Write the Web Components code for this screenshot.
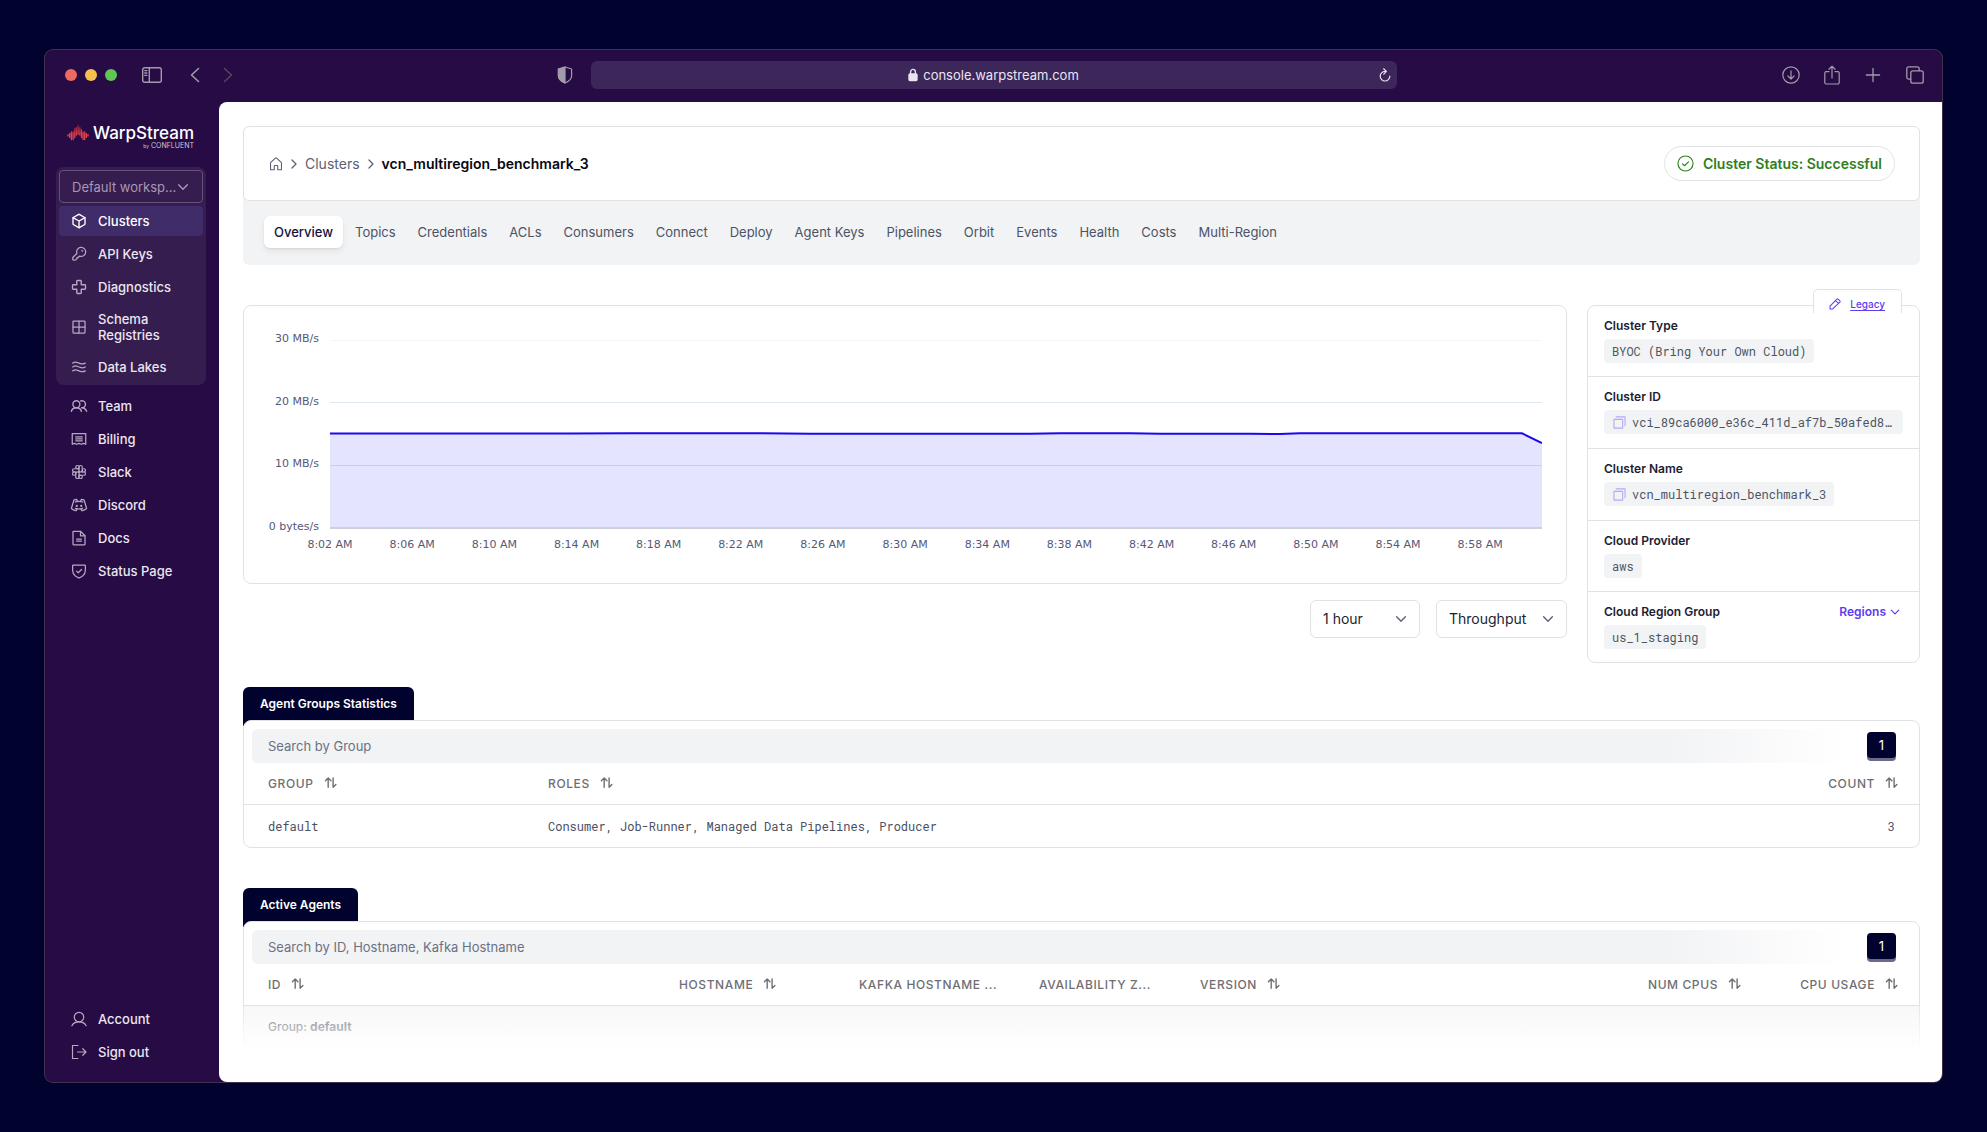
<!DOCTYPE html>
<html lang="en">
<head>
<meta charset="utf-8">
<title>WarpStream Console</title>
<style>
  html, body { margin: 0; height: 100%; }
  body {
    background: #02022f;
    font-family: Inter, "Liberation Sans", sans-serif;
    font-size: 13px;
    line-height: 16px;
    color: #1b1d33;
    --mono: "Roboto Mono", "DejaVu Sans Mono", "Liberation Mono", monospace;
    --line: #e1e2e4;
    --soft: #f2f3f5;
    --ink: #02022f;
    --slate: #5a6274;
    --violet: #5b3df0;
  }
</style>
</head>
<body>
<app-window>
  <title-bar slot="bar"></title-bar>
  <side-nav slot="nav"></side-nav>
  <page-header></page-header>
  <cluster-overview></cluster-overview>
  <data-panel heading="Agent Groups Statistics" placeholder="Search by Group"><groups-table></groups-table></data-panel>
  <data-panel class="last" heading="Active Agents" placeholder="Search by ID, Hostname, Kafka Hostname"><agents-table></agents-table></data-panel>
</app-window>

<script>
const define = (name, html, setup) => {
  const template = document.createElement('template');
  template.innerHTML = html;
  customElements.define(name, class extends HTMLElement {
    constructor() {
      super();
      this.attachShadow({ mode: 'open' }).append(template.content.cloneNode(true));
    }
    connectedCallback() {
      if (this.ready) return;
      this.ready = true;
      if (setup) setup(this, this.shadowRoot);
    }
  });
};

/* Line icons: [viewBox, stroke width, markup] */
const ICONS = {
  cube: ['0 0 256 256', 22, '<path d="M224,177.3V78.7a8.1,8.1,0,0,0-4.1-7l-88-49.5a7.8,7.8,0,0,0-7.8,0l-88,49.5a8.1,8.1,0,0,0-4.1,7v98.6a8.1,8.1,0,0,0,4.1,7l88,49.5a7.8,7.8,0,0,0,7.8,0l88-49.5A8.1,8.1,0,0,0,224,177.3Z"/><path d="M222.9,74.6 128.9,128 33.1,74.6M128.9,128 128,234"/>'],
  key: ['0 0 256 256', 20, '<path d="M95,119A72,72,0,1,1,137,161L114,184H96v18L78,220a14,14,0,0,1-10,4H40a12,12,0,0,1-12-12V190a14,14,0,0,1,4-10Z"/><circle cx="180" cy="76" r="5"/>'],
  cross: ['0 0 256 256', 22, '<path d="M104,24h48a12,12,0,0,1,12,12V92h56a12,12,0,0,1,12,12v48a12,12,0,0,1-12,12H164v56a12,12,0,0,1-12,12H104a12,12,0,0,1-12-12V164H36a12,12,0,0,1-12-12V104a12,12,0,0,1,12-12H92V36A12,12,0,0,1,104,24Z"/>'],
  grid: ['0 0 256 256', 20, '<rect x="32" y="32" width="192" height="192" rx="8"/><path d="M128,32V224M32,128H224"/>'],
  waves: ['0 0 256 256', 20, '<path d="M28,66c50-36,66-10,100,0s50,30,100,0M28,128c50-36,66-10,100,0s50,30,100,0M28,190c50-36,66-10,100,0s50,30,100,0"/>'],
  users: ['0 0 256 256', 22, '<circle cx="86" cy="100" r="56"/><path d="M6,212c8-32,34-56,80-56s72,24,80,56M156,48a56,56,0,1,1,14,108c38,0,66,22,80,56"/>'],
  receipt: ['0 0 256 256', 20, '<path d="M20,212V40H236V212l-36-14-36,14-36-14-36,14L56,198Z"/><path d="M76,94H180M76,126H180M76,156H180"/>'],
  slack: ['10 10 236 236', 18, '<path d="M56,128a24,24,0,1,0,24,24V128ZM128,56a24,24,0,1,0-24,24h24ZM200,128a24,24,0,1,0-24-24v24ZM128,200a24,24,0,1,0,24-24H128Z"/><path d="M152,128a24,24,0,0,1-24-24V56a24,24,0,0,1,48,0v48A24,24,0,0,1,152,128ZM128,152a24,24,0,0,1,24-24h48a24,24,0,0,1,0,48H152A24,24,0,0,1,128,152ZM104,128a24,24,0,0,1,24,24v48a24,24,0,0,1-48,0V152A24,24,0,0,1,104,128ZM128,104a24,24,0,0,1-24,24H56a24,24,0,0,1,0-48h48A24,24,0,0,1,128,104Z"/>'],
  discord: ['6 6 244 244', 20, '<circle cx="94" cy="142" r="7"/><circle cx="162" cy="142" r="7"/><path d="M74,82a175,175,0,0,1,108,0M74,178a175,175,0,0,0,108,0M155,184l14,26a8,8,0,0,0,9,4c23-6,44-15,62-30a8,8,0,0,0,3-9L206,56a8,8,0,0,0-5-5,158,158,0,0,0-32-9,8,8,0,0,0-9,6l-7,26M101,184,87,210a8,8,0,0,1-9,4c-23-6-44-15-62-30a8,8,0,0,1-3-9L50,56a8,8,0,0,1,5-5,158,158,0,0,1,32-9,8,8,0,0,1,9,6l7,26"/>'],
  file: ['0 0 256 256', 20, '<path d="M216,236H40a8,8,0,0,1-8-8V28a8,8,0,0,1,8-8h112l72,72V228A8,8,0,0,1,216,236Z"/><path d="M152,22V92H222M90,144h76M90,178h76"/>'],
  shield: ['0 0 256 256', 20, '<path d="M26,114V42a8,8,0,0,1,8-8H222a8,8,0,0,1,8,8v72c0,86-80,118-98,123a10,10,0,0,1-8,0C106,232,26,200,26,114Z"/><path d="M168,104l-52,52-28-26"/>'],
  user: ['0 0 256 256', 19, '<circle cx="128" cy="98" r="76"/><path d="M14,236c20-42,60-62,114-62s94,20,114,62"/>'],
  signout: ['0 0 256 256', 19, '<path d="M112,24H24V232h88M104,128H240M188,76l52,52-52,52"/>'],
  home: ['0 0 256 256', 20, '<path d="M28,232V112a16,16,0,0,1,5-12L117,22a16,16,0,0,1,22,0l84,78a16,16,0,0,1,5,12V232H160V164a8,8,0,0,0-8-8H104a8,8,0,0,0-8,8v68Z"/>'],
  right: ['0 0 6 10', 1.3, '<path d="M1,1 5,5 1,9"/>'],
  down: ['0 0 16 16', 1.6, '<path d="M3,5.5 8,10.5 13,5.5"/>'],
  check: ['0 0 18 18', 1.2, '<circle cx="9" cy="9" r="8"/><path d="M5.8,9.4 8,11.4 12.2,7.2"/>'],
  pencil: ['0 0 14 14', 1.2, '<path d="M1.2,12.8V9.6L9.2,1.3a1,1,0,0,1,1.4,0L12.7,3.4a1,1,0,0,1,0,1.4L4.4,12.8ZM7.6,3l3.4,3.4"/>'],
  copy: ['0 0 14 14', 1.2, '<path d="M1,3.6H10.4V13H1ZM3.4,1H13V10.6"/>'],
  sort: ['0 1 14 14', 1.5, '<path d="M4.5,12V2M1.5,5 4.5,2 7.5,5"/><path d="M9.8,2V12M9.8,12 12.8,9M9.8,12V9"/>'],
  sidebar: ['0 0 20 16', 1.4, '<rect x=".7" y=".7" width="18.6" height="14.6" rx="2"/><path d="M7.3,1V15M2.8,3.6h2M2.8,6h2M2.8,8.4h2"/>'],
  back: ['0 0 10 16', 1.6, '<path d="M8.5,1.5 1.5,8 8.5,14.5"/>'],
  forward: ['0 0 10 16', 1.6, '<path d="M1.5,1.5 8.5,8 1.5,14.5"/>'],
  privacy: ['0 0 16 18', 1.2, '<path d="M8,1 14.6,3V10c0,3.4-3,5.4-6.6,7C4.4,15.4,1.4,13.4,1.4,10V3Z"/><path d="M8,1V17C4.4,15.4,1.4,13.4,1.4,10V3Z" fill="currentColor"/>'],
  lock: ['0 0 10 14', 1.4, '<rect x="1" y="6" width="8" height="6.6" rx="1" fill="currentColor"/><path d="M2.6,6V4a2.4,2.6,0,0,1,4.8,0V6"/>'],
  reload: ['0 0 12 14', 1.2, '<path d="M6,3.4A4.8,4.8,0,1,0,10.8,8.2M4.6,.8 7.4,3.4 4.8,6.2"/>'],
  download: ['0 0 18 18', 1.2, '<circle cx="9" cy="9" r="8.2"/><path d="M9,4.8V13M5.8,9.8 9,13 12.2,9.8"/>'],
  share: ['0 0 16 20', 1.2, '<path d="M5,6.6H2.2a1.4,1.4,0,0,0-1.4,1.4V17.6A1.4,1.4,0,0,0,2.2,19H13.8a1.4,1.4,0,0,0,1.4-1.4V8a1.4,1.4,0,0,0-1.4-1.4H11M8,13V1.2M4.9,4.2 8,1.2 11.1,4.2"/>'],
  plus: ['0 0 14 14', 1.3, '<path d="M7,.4V13.6M.4,7H13.6"/>'],
  tabs: ['0 0 18 18', 1.3, '<rect x="4.8" y="4.8" width="12.4" height="12.4" rx="2"/><path d="M4.6,13.2H2.8a2,2,0,0,1-2-2V2.8a2,2,0,0,1,2-2h8.4a2,2,0,0,1,2,2V4.6"/>'],
};
define('line-icon', `<style>
  :host { display: block; flex: none; width: 16px; height: 16px; }
  svg { display: block; width: 100%; height: 100%; overflow: visible; }
</style>`, (el, root) => {
  const [box, stroke, body] = ICONS[el.getAttribute('name')];
  root.innerHTML += `<svg aria-hidden="true" viewBox="${box}" fill="none" stroke="currentColor" stroke-width="${stroke}" stroke-linecap="round" stroke-linejoin="round">${body}</svg>`;
});

const RESET = `
  * { box-sizing: border-box; }
  button, input, select { font: inherit; color: inherit; background: none; border: 0; margin: 0; padding: 0; appearance: none; outline: none; }
  a { color: inherit; text-decoration: none; }
`;

define('app-window', `<style>${RESET}
  :host { display: block; height: 100vh; box-sizing: border-box; padding: 50px 45px; }
  .frame { height: 100%; display: grid; grid-template: auto minmax(0, 1fr) / 174px minmax(0, 1fr);
    background: #260b44; border-radius: 8px; overflow: hidden; box-shadow: 0 0 0 1px #40324e; }
  slot[name=bar] { display: block; grid-column: 1 / -1; }
  main { background: #fff; border-radius: 8px 0 0 8px; padding: 24px 22px 0 24px; overflow: hidden;
    display: flex; flex-direction: column; }
  ::slotted(page-header) { margin-bottom: 40px; }
  ::slotted(cluster-overview) { margin-bottom: 24px; }
  ::slotted(data-panel) { margin-bottom: 40px; }
</style>
<div class="frame">
  <slot name="bar"></slot><slot name="nav"></slot>
  <main><slot></slot></main>
</div>`);

define('title-bar', `<style>${RESET}
  :host { display: grid; grid-template-columns: 1fr auto 1fr; align-items: center; height: 52px; box-sizing: border-box; padding-bottom: 2px; color: #a39bab; }
  .left, .right, .lights { display: flex; align-items: center; }
  .left { padding-left: 20px; }
  .lights { gap: 8px; }
  .lights i { width: 12px; height: 12px; border-radius: 50%; background: #ed6a5e; }
  .lights i:nth-child(2) { background: #f5bf4f; }
  .lights i:nth-child(3) { background: #61c554; }
  .pane { width: 20px; margin-left: 25px; }
  .pane line-icon { width: 20px; }
  .back { margin-left: 28px; }
  .fwd { margin-left: 23px; color: #55435f; }
  .back line-icon, .fwd line-icon { width: 10px; }
  .shield { width: 16px; height: 18px; margin: 0 18px 0 auto; }
  .address { width: 42vw; max-width: 806px; height: 28px; border-radius: 6px; background: #3c265a; color: #e9e5ee;
    display: grid; grid-template-columns: 12px 1fr 12px; align-items: center; padding: 0 6px; }
  .url { grid-column: 2; display: flex; justify-content: center; align-items: center; gap: 5px; }
  .url line-icon { width: 10px; height: 14px; }
  input { field-sizing: content; font-size: 13px; height: 20px; }
  .address button line-icon { width: 12px; height: 14px; }
  .right { justify-content: flex-end; gap: 24px; padding-right: 18px; }
  .right line-icon { width: 18px; height: 18px; }
  .right .share { width: 16px; height: 20px; }
  .right .plus { width: 14px; height: 14px; margin: 0 2px; }
</style>
<div class="left">
  <div class="lights"><i></i><i></i><i></i></div>
  <button class="pane" aria-label="Toggle sidebar"><line-icon name="sidebar"></line-icon></button>
  <button class="back" aria-label="Back"><line-icon name="back"></line-icon></button>
  <button class="fwd" aria-label="Forward"><line-icon name="forward"></line-icon></button>
  <line-icon class="shield" name="privacy"></line-icon>
</div>
<div class="address">
  <div class="url"><line-icon name="lock"></line-icon><input type="text" aria-label="Address" value="console.warpstream.com"></div>
  <button aria-label="Reload"><line-icon name="reload"></line-icon></button>
</div>
<div class="right">
  <button aria-label="Downloads"><line-icon name="download"></line-icon></button>
  <button aria-label="Share"><line-icon class="share" name="share"></line-icon></button>
  <button aria-label="New tab"><line-icon class="plus" name="plus"></line-icon></button>
  <button aria-label="Tabs"><line-icon name="tabs"></line-icon></button>
</div>`);

define('warp-logo', `<style>${RESET}
  :host { display: grid; grid-template-columns: 22px auto; justify-content: start; column-gap: 4px; color: #fff; }
  svg { width: 22px; height: 17px; }
  b { font-size: 17px; line-height: 18px; font-weight: 500; }
  small { grid-column: 2; justify-self: end; font-size: 7px; line-height: 8px; color: #cfc6d8; }
  small span { font-size: 5px; }
</style>
<svg viewBox="0 0 22 17" aria-hidden="true">
  <defs><linearGradient id="g" x1="0" y1="0" x2="0" y2="17" gradientUnits="userSpaceOnUse"><stop offset=".1" stop-color="#7d2040"/><stop offset=".6" stop-color="#e8404a"/></linearGradient></defs>
  <path fill="none" stroke="url(#g)" stroke-width="1.3" stroke-linecap="round" d="M1,10.6V12M2.7,9.4V13.4M4.4,8V15.6M6.1,8V15.6M7.8,4.4V13.6M9.5,3.4V11M11.2,1.2V10M12.9,3.6V11M14.5,5.4V13.6M16.1,8V15.6M17.7,8V15.6M19.4,9.4V13.4M21,10.6V12"/>
</svg>
<b>WarpStream</b><small><span>by</span> CONFLUENT</small>`);

define('nav-item', `<style>${RESET}
  :host { display: block; }
  a { display: flex; align-items: center; gap: 11px; min-height: 30px; padding: 6px 12px; border-radius: 4px;
    font-weight: 500; color: #eae6ef; }
  line-icon { color: #b6a8c2; }
  :host([active]) a { background: #402c68; color: #fff; }
  :host([active]) line-icon { color: #fff; }
</style>
<a href="#"><span><slot></slot></span></a>`, (el, root) => {
  const icon = document.createElement('line-icon');
  icon.setAttribute('name', el.getAttribute('icon'));
  root.querySelector('a').prepend(icon);
});

define('side-nav', `<style>${RESET}
  :host { display: flex; flex-direction: column; padding: 22px 13px 15px 11px; }
  warp-logo { margin: 0 0 17px 11px; }
  .group, .list { display: flex; flex-direction: column; gap: 3px; padding: 3px; }
  .group { background: #351d50; border-radius: 8px; margin-bottom: 3px; }
  .list:last-child { margin-top: auto; padding-bottom: 0; }
  .pick { position: relative; display: block; color: #a798b6; }
  select { width: 100%; height: 33px; border: 1px solid #66527b; border-radius: 4px; padding: 0 24px 0 12px; }
  option { color: #222; }
  .pick line-icon { position: absolute; right: 13px; top: 10px; width: 14px; height: 14px; pointer-events: none; }
</style>
<warp-logo></warp-logo>
<nav class="group">
  <label class="pick"><select aria-label="Workspace"><option>Default worksp...</option></select><line-icon name="down"></line-icon></label>
  <nav-item icon="cube" active>Clusters</nav-item>
  <nav-item icon="key">API Keys</nav-item>
  <nav-item icon="cross">Diagnostics</nav-item>
  <nav-item icon="grid">Schema Registries</nav-item>
  <nav-item icon="waves">Data Lakes</nav-item>
</nav>
<nav class="list">
  <nav-item icon="users">Team</nav-item>
  <nav-item icon="receipt">Billing</nav-item>
  <nav-item icon="slack">Slack</nav-item>
  <nav-item icon="discord">Discord</nav-item>
  <nav-item icon="file">Docs</nav-item>
  <nav-item icon="shield">Status Page</nav-item>
</nav>
<nav class="list">
  <nav-item icon="user">Account</nav-item>
  <nav-item icon="signout">Sign out</nav-item>
</nav>`);

define('page-header', `<style>${RESET}
  :host { display: block; flex: none; background: var(--soft); border-radius: 6px; }
  header { display: flex; justify-content: space-between; align-items: center; height: 75px; padding: 0 24px 0 25px;
    background: #fff; border: 1px solid var(--line); border-radius: 6px; font-size: 14px; }
  .crumbs { display: flex; align-items: center; gap: 8px; color: var(--slate); }
  .crumbs line-icon { width: 6px; height: 10px; }
  .crumbs a line-icon { width: 14px; height: 14px; }
  .crumbs b { font-weight: 600; color: #08080f; }
  .status { display: flex; align-items: center; gap: 9px; height: 35px; padding: 0 12px; border: 1px solid var(--line);
    border-radius: 18px; color: #2d7f1c; font-weight: 600; }
  .status b { font-weight: 600; }
  .status line-icon { width: 17px; height: 17px; }
  nav { display: flex; gap: 2px; padding: 15px 21px 17px; }
  nav a { padding: 8px 10px; border-radius: 6px; color: #4b5365; }
  nav a.on { background: #fff; color: #15103f; font-weight: 500; box-shadow: 0 4px 6px rgb(0 0 0 / .06), 0 1px 2px rgb(0 0 0 / .08); }
</style>
<header>
  <div class="crumbs">
    <a href="#" aria-label="Home"><line-icon name="home"></line-icon></a><line-icon name="right"></line-icon>
    <a href="#">Clusters</a><line-icon name="right"></line-icon><b>vcn_multiregion_benchmark_3</b>
  </div>
  <div class="status"><line-icon name="check"></line-icon><span><b>Cluster Status:</b> Successful</span></div>
</header>
<nav><a href="#" class="on">Overview</a><a href="#">Topics</a><a href="#">Credentials</a><a href="#">ACLs</a><a href="#">Consumers</a><a href="#">Connect</a><a href="#">Deploy</a><a href="#">Agent Keys</a><a href="#">Pipelines</a><a href="#">Orbit</a><a href="#">Events</a><a href="#">Health</a><a href="#">Costs</a><a href="#">Multi-Region</a></nav>`);

define('throughput-chart', `<style>${RESET}
  :host { display: grid; grid-template-columns: 64px minmax(0, 1fr); column-gap: 11px; height: 279px; box-sizing: border-box;
    padding: 25px 24px 24px 11px; border: 1px solid var(--line); border-radius: 8px;
    font-family: Verdana, "DejaVu Sans", sans-serif; font-size: 11px; color: #565877; }
  .scale { display: flex; flex-direction: column; justify-content: space-between; height: 204px; text-align: right; }
  .plot { width: 100%; height: 220px; margin-top: 9px; overflow: visible; display: block; }
  text { fill: currentColor; text-anchor: middle; }
</style>
<div class="scale"><span>30 MB/s</span><span>20 MB/s</span><span>10 MB/s</span><span>0 bytes/s</span></div>
<svg class="plot" role="img" aria-label="Throughput over the last hour">
  <g stroke-width="1"><line x2="100%" y1=".5" y2=".5" stroke="#f5f5f6"/><line x2="100%" y1="62.5" y2="62.5" stroke="#e0e6ee"/><line x2="100%" y1="125.5" y2="125.5" stroke="#e0e6ee"/></g>
  <svg width="100%" height="189" viewBox="0 0 1212 189" preserveAspectRatio="none">
    <path d="M0,93.5H1192L1212,103V189H0Z" fill="#1a14f4" fill-opacity=".115"/>
    <path d="M0,93.5H240L300,93.2H420L480,93.8H700L730,93.3H800L830,93.7H920L950,94.1L970,93.3H1192L1212,103" fill="none" stroke="#1d07ee" stroke-width="2" vector-effect="non-scaling-stroke"/>
  </svg>
  <line x2="100%" y1="188" y2="188" stroke="#d0cfdc" stroke-width="2"/>
  <g class="times"></g>
</svg>`, (el, root) => {
  const times = root.querySelector('.times');
  for (let i = 0; i < 15; i++) {
    const label = document.createElementNS('http://www.w3.org/2000/svg', 'text');
    label.setAttribute('x', (i * 94.9 / 14).toFixed(2) + '%');
    label.setAttribute('y', 208);
    label.textContent = `8:${String(2 + i * 4).padStart(2, '0')} AM`;
    times.append(label);
  }
});

define('pick-box', `<style>${RESET}
  :host { display: block; position: relative; font-size: 14px; }
  select { width: 100%; height: 38px; border: 1px solid var(--line); border-radius: 6px; padding: 0 12px; }
  line-icon { position: absolute; right: 12px; top: 12px; width: 14px; height: 14px; color: var(--slate); pointer-events: none; }
</style>
<select><option></option></select><line-icon name="down"></line-icon>`, (el, root) => {
  root.querySelector('select').setAttribute('aria-label', el.getAttribute('label'));
  root.querySelector('option').textContent = el.getAttribute('value');
});

define('detail-row', `<style>${RESET}
  :host { display: block; padding: 12px 16px; min-height: 71px; box-sizing: border-box; font-size: 12px; border-top: 1px solid var(--line); }
  :host(:first-of-type) { border-top: 0; min-height: 70px; }
  :host([copy]) { min-height: 72px; }
  .head { display: flex; justify-content: space-between; font-weight: 600; margin-bottom: 5px; }
  .chip { display: inline-flex; align-items: center; gap: 6px; max-width: 100%; height: 24px; padding: 0 8px; border-radius: 4px;
    background: var(--soft); font-family: var(--mono); color: #4d5362; white-space: nowrap; vertical-align: top; }
  :host([wide]) .chip { width: 100%; }
  .chip button { display: none; color: #b3a9f7; }
  :host([copy]) .chip button { display: block; padding-left: 1px; }
  .chip line-icon { width: 13px; height: 13px; }
</style>
<div class="head"><span class="name"></span><slot name="action"></slot></div>
<div class="chip"><button aria-label="Copy"><line-icon name="copy"></line-icon></button><span><slot></slot></span></div>`, (el, root) => {
  root.querySelector('.name').textContent = el.getAttribute('name');
});

define('cluster-overview', `<style>${RESET}
  :host { display: grid; flex: none; grid-template-columns: minmax(0, 1fr) 333px; column-gap: 20px; align-items: start; }
  .picks { display: flex; justify-content: flex-end; gap: 16px; margin-top: 16px; }
  .picks :first-child { width: 110px; }
  .picks :last-child { width: 131px; }
  aside { position: relative; border: 1px solid var(--line); border-radius: 8px; }
  .legacy { position: absolute; top: -17px; right: 17px; display: flex; align-items: center; gap: 9px; height: 24px; padding: 5px 16px 0 15px;
    background: #fff; border: 1px solid var(--line); border-bottom: 0; border-radius: 5px 5px 0 0; font-size: 10px; font-weight: 500; color: var(--violet); }
  .legacy line-icon { width: 12px; height: 12px; }
  .legacy a { text-decoration: underline; text-underline-offset: 2px; }
  .regions { display: flex; align-items: center; gap: 3px; padding-right: 2px; font-weight: 600; color: var(--violet); }
  .regions line-icon { width: 12px; height: 12px; }
</style>
<section>
  <throughput-chart></throughput-chart>
  <div class="picks"><pick-box label="Time range" value="1 hour"></pick-box><pick-box label="Metric" value="Throughput"></pick-box></div>
</section>
<aside>
  <detail-row name="Cluster Type">BYOC (Bring Your Own Cloud)</detail-row>
  <detail-row name="Cluster ID" copy wide>vci_89ca6000_e36c_411d_af7b_50afed8…</detail-row>
  <detail-row name="Cluster Name" copy>vcn_multiregion_benchmark_3</detail-row>
  <detail-row name="Cloud Provider">aws</detail-row>
  <detail-row name="Cloud Region Group"><button slot="action" class="regions">Regions <line-icon name="down"></line-icon></button>us_1_staging</detail-row>
  <div class="legacy"><line-icon name="pencil"></line-icon><a href="#">Legacy</a></div>
</aside>`);

define('data-panel', `<style>${RESET}
  :host { display: block; flex: none; position: relative; }
  h2 { width: fit-content; margin: 0 0 -6px; padding: 8px 17px 14px; border-radius: 6px 6px 0 0; background: var(--ink); color: #fff;
    font-size: 12px; line-height: 17px; font-weight: 600; }
  .card { position: relative; background: #fff; border: 1px solid var(--line); border-radius: 8px; }
  .bar { display: flex; align-items: center; height: 34px; margin: 8px 23px 0 8px; border-radius: 6px;
    background: linear-gradient(90deg, var(--soft) 86%, #fff 97%); }
  input { flex: 1; height: 100%; padding-left: 16px; }
  input::placeholder { color: #6b7182; opacity: 1; }
  .bar button { width: 29px; height: 26px; margin-bottom: 3px; border-radius: 4px; background: var(--ink); color: #fff; box-shadow: 0 3px 0 #6b6a8b; }
  .fade { display: none; }
  :host(.last) .fade { display: block; position: absolute; inset: auto -1px -1px; height: 45px;
    background: linear-gradient(rgb(255 255 255 / .15), rgb(255 255 255 / .9) 90%, #fff); }
</style>
<h2></h2>
<div class="card">
  <div class="bar"><input type="search"><button aria-label="Page 1">1</button></div>
  <slot></slot>
  <div class="fade"></div>
</div>`, (el, root) => {
  root.querySelector('h2').textContent = el.getAttribute('heading');
  const input = root.querySelector('input');
  input.placeholder = el.getAttribute('placeholder');
  input.setAttribute('aria-label', input.placeholder);
});

const TABLE = `${RESET}
  :host { display: block; }
  table { width: 100%; table-layout: fixed; border-collapse: collapse; font-size: 12px; }
  th { height: 41px; padding: 0 0 0 24px; text-align: left; border-bottom: 1px solid var(--line); font-weight: 500; }
  th button { display: inline-flex; align-items: center; gap: 10px; letter-spacing: .05em; color: #6e6e73; white-space: nowrap; vertical-align: middle; }
  th line-icon { width: 13px; height: 13px; }
  td { height: 43px; padding: 0 0 0 24px; font-family: var(--mono); color: #4a5062; }
  .end { text-align: right; padding-right: 21px; }
  td.end { padding-right: 24px; }
`;
define('groups-table', `<style>${TABLE}</style>
<table>
  <colgroup><col style="width:280px"><col><col style="width:20%"></colgroup>
  <thead><tr>
    <th><button>GROUP <line-icon name="sort"></line-icon></button></th>
    <th><button>ROLES <line-icon name="sort"></line-icon></button></th>
    <th class="end"><button>COUNT <line-icon name="sort"></line-icon></button></th>
  </tr></thead>
  <tbody><tr><td>default</td><td>Consumer, Job-Runner, Managed Data Pipelines, Producer</td><td class="end">3</td></tr></tbody>
</table>`);

define('agents-table', `<style>${TABLE}
  td.group { height: 44px; background: #f7f7f8; border-bottom: 1px dashed #d5d6da; font: 500 12px/16px Inter, "Liberation Sans", sans-serif; color: #555b6b; }
  .group b { font-weight: 700; }
</style>
<table>
  <colgroup><col><col style="width:180px"><col style="width:180px"><col style="width:161px"><col style="width:424px"><col style="width:162px"><col style="width:157px"></colgroup>
  <thead><tr>
    <th><button>ID <line-icon name="sort"></line-icon></button></th>
    <th><button>HOSTNAME <line-icon name="sort"></line-icon></button></th>
    <th><button>KAFKA HOSTNAME ...</button></th>
    <th><button>AVAILABILITY Z...</button></th>
    <th><button>VERSION <line-icon name="sort"></line-icon></button></th>
    <th class="end"><button>NUM CPUS <line-icon name="sort"></line-icon></button></th>
    <th class="end"><button>CPU USAGE <line-icon name="sort"></line-icon></button></th>
  </tr></thead>
  <tbody><tr><td class="group" colspan="7">Group: <b>default</b></td></tr></tbody>
</table>`);
</script>
</body>
</html>
